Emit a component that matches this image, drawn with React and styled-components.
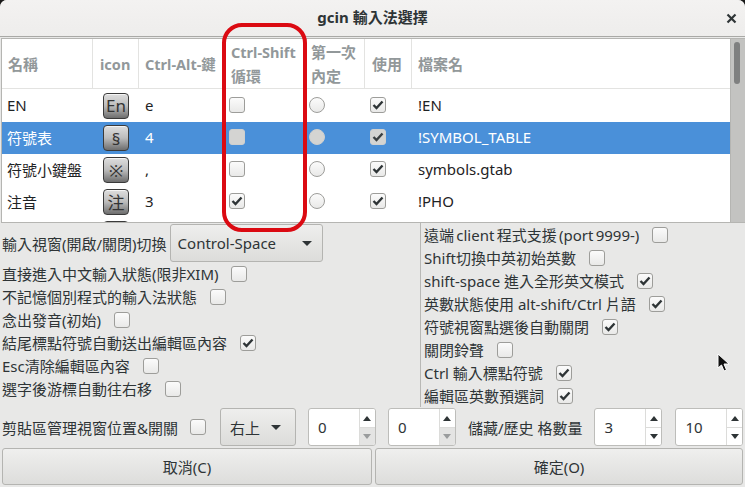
import React from 'react';
import styled, { createGlobalStyle } from 'styled-components';

const Global = createGlobalStyle`
  html, body { margin: 0; padding: 0; background: #1a1a1a; }
  body { width: 745px; height: 487px; overflow: hidden; }
  * { box-sizing: border-box; }
`;

const Window = styled.div`
  position: relative;
  width: 745px;
  height: 487px;
  background: #e8e8e7;
  border-radius: 7px 7px 0 0;
  overflow: hidden;
  font-family: "Noto Sans", "Noto Sans CJK TC", sans-serif;
  font-size: 15px;
  color: #2e3436;
`;

const TitleBar = styled.header`
  height: 37px;
  background: linear-gradient(#f3f2f1, #eeedec);
  border-bottom: 1px solid #a9a9a6;
  display: flex;
  align-items: center;
  justify-content: center;
  position: relative;
  font-weight: 700;
  font-size: 15px;
  padding-bottom: 3px;
`;

const Close = styled.svg`
  position: absolute;
  right: 8px;
  top: 13px;
`;

const TableFrame = styled.div`
  height: 185px;
  margin: 1px 0 0 1px;
  border: 1px solid #b5b5b2;
  border-right: 0;
  background: #fff;
  display: flex;
  overflow: hidden;
`;

const Table = styled.div`
  flex: 1;
  display: grid;
  grid-template-columns: 91px 46px 84px 84px 58px 47px 1fr;
  grid-template-rows: 50px 33px 32px 32px 32px 32px;
`;

const Th = styled.div`
  border-right: ${p => (p.$last ? '0' : '1px solid #e3e3e1')};
  border-bottom: 1px solid #e3e3e1;
  padding: 0 0 0 ${p => p.$pad || 6}px;
  display: flex;
  flex-direction: column;
  justify-content: center;
  color: #92989a;
  font-weight: 700;
  font-size: 15px;
  line-height: 24px;
  white-space: nowrap;
`;

const ThLatin = styled.span`
  font-size: 14.5px;
`;

const Td = styled.div`
  display: flex;
  align-items: center;
  justify-content: ${p => (p.$center ? 'center' : 'flex-start')};
  padding: ${p => (p.$center ? '0' : '0 5px')};
  padding-left: ${p => p.$pad || ''};
  padding-bottom: 2px;
  background: ${p => (p.$selected ? '#4a90d9' : '#fff')};
  color: ${p => (p.$selected ? '#fff' : '#1f2325')};
  white-space: nowrap;
  font-size: 15px;
`;

const KeyIcon = styled.div`
  width: 26px;
  height: 26px;
  margin-top: 2px;
  border-radius: 4px;
  border: 1px solid #3a3a3a;
  background: linear-gradient(#dedede, #bcbcbc 50%, #6e6e6e);
  box-shadow: inset 0 1px 0 #f4f4f4;
  color: #333;
  display: flex;
  align-items: center;
  justify-content: center;
  font-size: 17px;
  line-height: 1;
`;

const Box = styled.span`
  width: 16px;
  height: 16px;
  flex: none;
  margin-left: ${p => p.$ml || 0}px;
  border: 1px solid ${p => (p.$selected ? '#d0d0ce' : '#9d9d9a')};
  border-radius: 3px;
  background: ${p => (p.$selected ? '#d4d4d2' : 'linear-gradient(#fbfbfb, #e9e9e8)')};
  display: inline-flex;
  align-items: center;
  justify-content: center;
`;

const Radio = styled(Box)`
  border-radius: 50%;
`;

const ScrollTrack = styled.div`
  width: 15px;
  background: #c3c3c1;
  border-left: 1px solid #b5b5b2;
  padding: 3px 5px 0 3px;
`;

const ScrollThumb = styled.div`
  height: 42px;
  border-radius: 3px;
  background: #7f8080;
`;

const Options = styled.div`
  display: grid;
  grid-template-columns: 421px 1fr;
  height: 183px;
`;

const LeftCol = styled.div`
  padding: 1px 0 0 2px;
  border-right: 1px solid #b8b8b5;
  display: flex;
  flex-direction: column;
  align-items: flex-start;
`;

const RightCol = styled.div`
  padding: 0 0 0 3px;
  display: flex;
  flex-direction: column;
`;

const Row = styled.label`
  height: ${p => p.$h || 23}px;
  flex: none;
  display: flex;
  align-items: center;
  gap: ${p => p.$gap || 13}px;
  word-spacing: ${p => (p.$tight ? '-1.6px' : '0')};
  white-space: nowrap;
`;

const Select = styled.div`
  height: ${p => p.$h}px;
  width: ${p => p.$w}px;
  padding: 0 ${p => p.$pr || 12}px 0 ${p => p.$pl || 9}px;
  margin-left: ${p => p.$ml || 0}px;
  border: 1px solid #b4b4b1;
  border-radius: 3px;
  background: linear-gradient(#eeeeed, #dcdcda);
  display: flex;
  align-items: center;
  justify-content: space-between;
  flex: none;
`;

const Caret = styled.i`
  width: 0;
  height: 0;
  border-left: 5px solid transparent;
  border-right: 5px solid transparent;
  border-top: 5px solid #2e3436;
`;

const BottomRow = styled.div`
  height: 42px;
  padding: 0 0 0 2px;
  display: flex;
  align-items: center;
  white-space: nowrap;
`;

const BottomLabel = styled.span`
  margin-left: ${p => p.$ml || 0}px;
`;

const SpinBox = styled.div`
  width: 68px;
  height: 38px;
  margin-left: ${p => p.$ml || 0}px;
  border: 1px solid #bdbdba;
  border-radius: 3px;
  background: #fff;
  display: flex;
  flex: none;
  overflow: hidden;
`;

const SpinValue = styled.div`
  flex: 1;
  display: flex;
  align-items: center;
  padding-left: 9px;
`;

const SpinButtons = styled.div`
  width: 16px;
  border-left: 1px solid #dcdcda;
  display: grid;
  grid-template-rows: 1fr 1fr;
`;

const SpinButton = styled.div`
  display: flex;
  align-items: center;
  justify-content: center;
  background: ${p => (p.$off ? '#e4e4e3' : '#fff')};
  border-top: ${p => (p.$down ? '1px solid #dcdcda' : '0')};
  &::after {
    content: '';
    border-left: 4.5px solid transparent;
    border-right: 4.5px solid transparent;
    ${p => (p.$down ? 'border-top' : 'border-bottom')}: 5px solid ${p => (p.$off ? '#9a9c9d' : '#2e3436')};
  }
`;

const Actions = styled.div`
  display: grid;
  grid-template-columns: 370px 368px;
  column-gap: 3px;
  padding: 0 0 0 2px;
`;

const Button = styled.button`
  height: 37px;
  font: inherit;
  color: #2e3436;
  border: 1px solid #b4b4b1;
  border-radius: 3px;
  background: linear-gradient(#efefee, #dddddb);
`;

const Annotation = styled.div`
  position: absolute;
  left: 222px;
  top: 23px;
  width: 85px;
  height: 209px;
  border: 4.5px solid #db0a12;
  border-radius: 20px;
  pointer-events: none;
`;

const Pointer = styled.svg`
  position: absolute;
  left: 717px;
  top: 353px;
`;

const Check = ({ on, selected }) => (
  <Box $selected={selected}>
    {on && (
      <svg width="12" height="10" viewBox="0 0 12 10">
        <path d="M1.5 5 L4.5 8 L10.5 1.5" fill="none" stroke={selected ? '#3a3f41' : '#2e3436'} strokeWidth="2.4" />
      </svg>
    )}
  </Box>
);

const Spin = ({ value, ml, downOff }) => (
  <SpinBox $ml={ml}>
    <SpinValue>{value}</SpinValue>
    <SpinButtons>
      <SpinButton />
      <SpinButton $down $off={downOff} />
    </SpinButtons>
  </SpinBox>
);

const rows = [
  { name: 'EN', icon: 'En', key: 'e', cycle: false, file: '!EN' },
  { name: '符號表', icon: '§', key: '4', cycle: false, file: '!SYMBOL_TABLE', selected: true },
  { name: '符號小鍵盤', icon: '※', key: ',', cycle: false, file: 'symbols.gtab' },
  { name: '注音', icon: '注', key: '3', cycle: true, file: '!PHO' },
  { name: '', icon: '', key: '', cycle: false, file: '' },
];

const leftOptions = [
  ['直接進入中文輸入狀態(限非XIM)', false],
  ['不記憶個別程式的輸入法狀態', false],
  ['念出發音(初始)', false],
  ['結尾標點符號自動送出編輯區內容', true],
  ['Esc清除編輯區內容', false],
  ['選字後游標自動往右移', false],
];

const rightOptions = [
  ['遠端 client 程式支援 (port 9999-)', false, true],
  ['Shift切換中英初始英數', false],
  ['shift-space 進入全形英文模式', true],
  ['英數狀態使用 alt-shift/Ctrl 片語', true],
  ['符號視窗點選後自動關閉', true],
  ['關閉鈴聲', false],
  ['Ctrl 輸入標點符號', true],
  ['編輯區英數預選詞', true],
];

export default function App() {
  return (
    <Window>
      <Global />
      <TitleBar>
        gcin 輸入法選擇
        <Close width="11" height="11" viewBox="0 0 11 11">
          <path d="M1.5 1.5 L9.5 9.5 M9.5 1.5 L1.5 9.5" stroke="#2e3436" strokeWidth="2.2" />
        </Close>
      </TitleBar>
      <TableFrame>
        <Table>
          <Th>名稱</Th>
          <Th $pad={7}><ThLatin>icon</ThLatin></Th>
          <Th><ThLatin>Ctrl-Alt-鍵</ThLatin></Th>
          <Th $pad={8}><ThLatin>Ctrl-Shift</ThLatin><span>循環</span></Th>
          <Th $pad={4}><span>第一次</span><span>內定</span></Th>
          <Th $pad={7}>使用</Th>
          <Th $last>檔案名</Th>
          {rows.map((r, i) => (
            <React.Fragment key={i}>
              <Td $selected={r.selected}>{r.name}</Td>
              <Td $selected={r.selected} $center>
                <KeyIcon>{r.icon}</KeyIcon>
              </Td>
              <Td $selected={r.selected} $pad="6px">{r.key}</Td>
              <Td $selected={r.selected} $pad="6px">{r.name && <Check on={r.cycle} selected={r.selected} />}</Td>
              <Td $selected={r.selected} $pad="2px">{r.name && <Radio $selected={r.selected} />}</Td>
              <Td $selected={r.selected} $pad="5px">{r.name && <Check on selected={r.selected} />}</Td>
              <Td $selected={r.selected} $pad="6px">{r.file}</Td>
            </React.Fragment>
          ))}
        </Table>
        <ScrollTrack>
          <ScrollThumb />
        </ScrollTrack>
      </TableFrame>
      <Options>
        <LeftCol>
          <Row $h={38} $gap={3}>
            輸入視窗(開啟/關閉)切換
            <Select $w={153} $h={38} $pl={7} $pr={10}>Control-Space<Caret /></Select>
          </Row>
          {leftOptions.map(([label, on]) => (
            <Row key={label}>
              {label}
              <Check on={on} />
            </Row>
          ))}
        </LeftCol>
        <RightCol>
          {rightOptions.map(([label, on, tight]) => (
            <Row key={label} $tight={tight}>
              {label}
              <Check on={on} />
            </Row>
          ))}
        </RightCol>
      </Options>
      <BottomRow>
        剪貼區管理視窗位置&開關
        <Box $ml={12} />
        <Select $w={76} $ml={14} $h={38} $pr={14}>右上<Caret /></Select>
        <Spin value="0" ml={12} downOff />
        <Spin value="0" ml={12} downOff />
        <BottomLabel $ml={12}>儲藏/歷史 格數量</BottomLabel>
        <Spin value="3" ml={12} />
        <Spin value="10" ml={13} />
      </BottomRow>
      <Actions>
        <Button>取消(C)</Button>
        <Button>確定(O)</Button>
      </Actions>
      <Annotation />
      <Pointer width="14" height="20" viewBox="0 0 14 20">
        <path d="M1 1 L1 15 L4.5 12 L7 18 L9.5 17 L7 11 L12 11 Z" fill="#111" stroke="#fff" strokeWidth="1" />
      </Pointer>
    </Window>
  );
}
